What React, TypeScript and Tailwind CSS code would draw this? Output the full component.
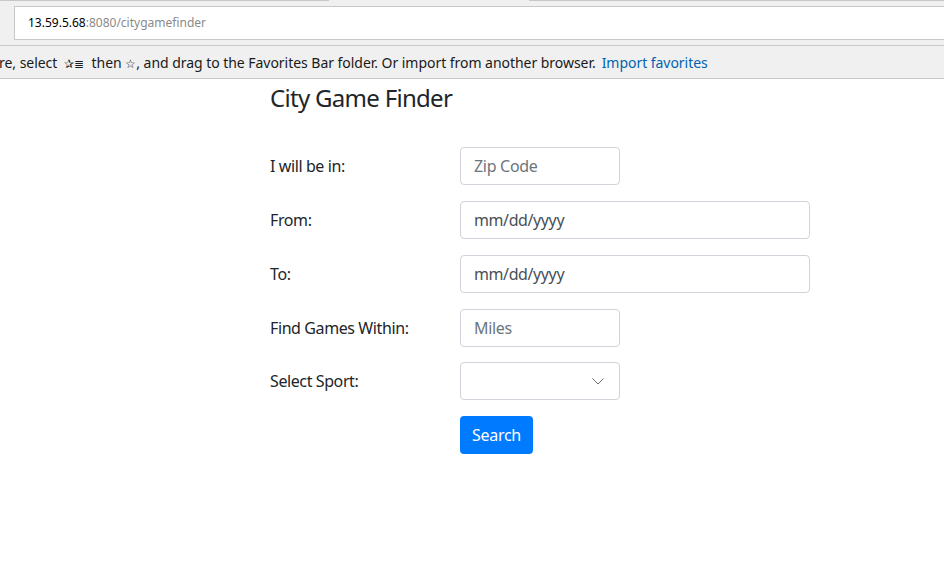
import React from "react";

const font = { fontFamily: '"Noto Sans", "Open Sans", sans-serif' };

function Row({ label, children }: { label: string; children: React.ReactNode }) {
  return (
    <div className="flex items-center h-[38px]">
      <div className="w-[190px] text-[16px] text-[#212529] tracking-[-0.4px]">{label}</div>
      {children}
    </div>
  );
}

export default function App() {
  return (
    <div className="w-[944px] h-[585px] bg-white overflow-hidden" style={font}>
      {/* tab strip */}
      <div className="h-[6px] bg-[#f0f0f0] flex">
        <div className="w-[329px] h-px bg-[#c8c8c8]" />
        <div className="w-[200px]" />
        <div className="flex-1 h-px bg-[#c8c8c8]" />
      </div>
      {/* address bar */}
      <div className="h-[34px] bg-[#f0f0f0] pl-[14px] flex">
        <div className="flex-1 bg-white border border-r-0 border-[#c8c8c8] flex items-center pl-[13px] text-[12px]">
          <span className="text-black">13.59.5.68</span>
          <span className="text-[#8a8a8a]">:8080/citygamefinder</span>
        </div>
      </div>
      <div className="h-[5px] bg-[#f0f0f0]" />
      {/* favorites bar */}
      <div className="h-[34px] bg-[#f0f0f0] border-y border-[#c8c8c8] flex items-center pt-[1px] text-[14px] text-[#1a1a1a] whitespace-nowrap tracking-[-0.04px]">
        <span className="-ml-[1px]">re, select&nbsp;&nbsp;<span className="text-[12px]">✰≣</span>&nbsp;&nbsp;then <span className="text-[12px]">☆</span>, and drag to the Favorites Bar folder. Or import from another browser.</span>
        <span className="ml-[6px] text-[#0063b1]">Import favorites</span>
      </div>
      {/* page */}
      <div className="pl-[270px] pt-[4px]">
        <h4 className="text-[24px] leading-[29px] text-[#212529] font-normal tracking-[-0.7px]">City Game Finder</h4>
        <div className="mt-[35px] flex flex-col gap-[16px]">
          <Row label="I will be in:">
            <div className="w-[160px] h-[38px] border border-[#ced4da] rounded-[4px] flex items-center px-[13px] text-[16px] tracking-[-0.3px] text-[#6c757d]">Zip Code</div>
          </Row>
          <Row label="From:">
            <div className="w-[350px] h-[38px] border border-[#ced4da] rounded-[4px] flex items-center px-[13px] text-[16px] tracking-[-0.4px] text-[#495057]">mm/dd/yyyy</div>
          </Row>
          <Row label="To:">
            <div className="w-[350px] h-[38px] border border-[#ced4da] rounded-[4px] flex items-center px-[13px] text-[16px] tracking-[-0.4px] text-[#495057]">mm/dd/yyyy</div>
          </Row>
          <Row label="Find Games Within:">
            <div className="w-[160px] h-[38px] border border-[#ced4da] rounded-[4px] flex items-center px-[13px] text-[16px] tracking-[-0.3px] text-[#6c757d]">Miles</div>
          </Row>
          <div className="-mt-[1px]">
            <Row label="Select Sport:">
              <div className="w-[160px] h-[38px] border border-[#ced4da] rounded-[4px] flex items-center justify-end pr-[15px]">
                <svg width="12" height="7" viewBox="0 0 12 7" fill="none">
                  <path d="M0.5 0.5 L6 6 L11.5 0.5" stroke="#6f6f6f" strokeWidth="1" />
                </svg>
              </div>
            </Row>
          </div>
          <div className="flex h-[38px]">
            <div className="w-[190px]" />
            <button className="w-[73px] h-[38px] bg-[#007bff] text-white rounded-[4px] text-[16px] tracking-[-0.3px]">Search</button>
          </div>
        </div>
      </div>
    </div>
  );
}
